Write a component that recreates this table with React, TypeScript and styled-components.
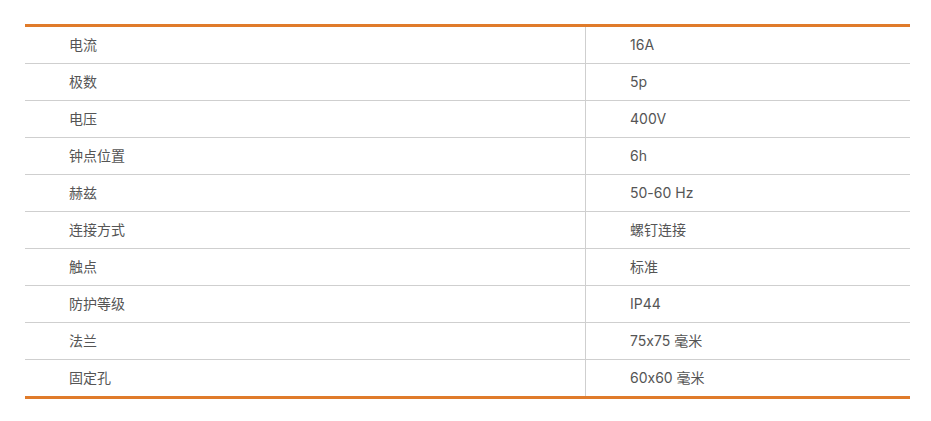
import React from "react";
import styled, { createGlobalStyle } from "styled-components";

const Global = createGlobalStyle`
  html, body { margin: 0; padding: 0; background: #fff; }
  body { font-family: "Inter", "Noto Sans CJK SC", sans-serif; }
`;

const Wrap = styled.div`
  padding: 24px 21px 0 25px;
`;

const Table = styled.table`
  width: 885px;
  border-collapse: collapse;
  border-top: 3px solid #e07b2a;
  border-bottom: 3px solid #e07b2a;
  font-size: 14px;
  color: #555;
  font-feature-settings: "calt" 0;
`;

const Row = styled.tr`
  & + & td { border-top: 1px solid #cfcfcf; }
`;

const Cell = styled.td<{ $first?: boolean }>`
  height: 36px;
  padding: 0 0 0 44px;
  box-sizing: content-box;
  vertical-align: middle;
  width: ${(p) => (p.$first ? "516px" : "auto")};
  border-right: ${(p) => (p.$first ? "1px solid #cfcfcf" : "none")};
  line-height: 20px;
`;

const rows: [string, string][] = [
  ["电流", "16A"],
  ["极数", "5p"],
  ["电压", "400V"],
  ["钟点位置", "6h"],
  ["赫兹", "50-60 Hz"],
  ["连接方式", "螺钉连接"],
  ["触点", "标准"],
  ["防护等级", "IP44"],
  ["法兰", "75x75 毫米"],
  ["固定孔", "60x60 毫米"],
];

export default function App() {
  return (
    <Wrap>
      <Global />
      <Table>
        <tbody>
          {rows.map(([k, v]) => (
            <Row key={k}>
              <Cell $first>{k}</Cell>
              <Cell>{v}</Cell>
            </Row>
          ))}
        </tbody>
      </Table>
    </Wrap>
  );
}
